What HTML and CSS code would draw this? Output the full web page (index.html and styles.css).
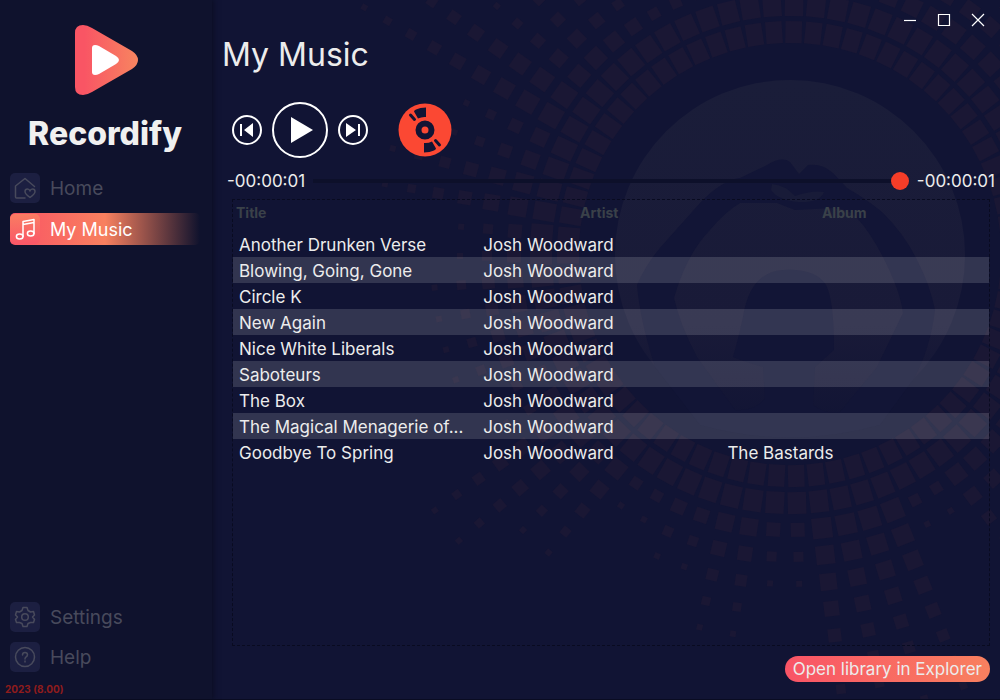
FILE: index.html
```html
<!DOCTYPE html>
<html lang="en">
<head>
  <meta charset="UTF-8">
  <meta name="viewport" content="width=device-width, initial-scale=1.0">
  <title>Recordify</title>
  <link rel="stylesheet" href="styles.css">
</head>
<body>
  <div class="app">
    <!-- Sidebar -->
    <aside class="sidebar">
      <svg class="logo" viewBox="0 0 64 70" aria-hidden="true">
        <defs>
          <linearGradient id="logoFill" x1="0" y1="0" x2="1" y2="0">
            <stop offset="0.15" stop-color="#f95564"/>
            <stop offset="1" stop-color="#f78560"/>
          </linearGradient>
        </defs>
        <path d="M0 8Q0 0 8 0Q12 0 17 3L57 26Q63 30 63 35Q63 40 57 44L17 67Q12 70 8 70Q0 70 0 62Z" fill="url(#logoFill)"/>
        <path d="M17 23Q17 20 20 20Q22 20 24 21L41 31Q44 33 44 35Q44 37 41 39L24 49Q22 50 20 50Q17 50 17 47Z" fill="#fff"/>
      </svg>
      <div class="brand">Recordify</div>

      <nav class="menu">
        <a class="menu-item" href="#home">
          <span class="menu-icon">
            <svg viewBox="0 0 30 30"><path d="M15 25H6.500Q5.500 25 5.500 24V13L15 5.500L24.500 13.500"/><path d="M20 24.500Q15 21 15 18.500Q15 16 17.500 16Q19.300 16 20 18Q20.700 16 22.500 16Q25 16 25 18.500Q25 21 20 24.500Z"/></svg>
          </span>
          Home
        </a>
        <a class="menu-item active" href="#music">
          <span class="menu-icon">
            <svg viewBox="0 0 30 30"><ellipse cx="9.700" cy="22.500" rx="3.300" ry="2.500"/><ellipse cx="20.700" cy="19.500" rx="3.300" ry="2.500"/><path d="M13 22.500V7.500L24 5.500V19.500M13 10.500L24 8.500"/></svg>
          </span>
          My Music
        </a>
      </nav>

      <nav class="menu menu-bottom">
        <a class="menu-item" href="#settings">
          <span class="menu-icon">
            <svg viewBox="0 0 30 30"><circle cx="15" cy="15" r="3.300"/><path d="M13 5.500H17L18 8.500L20.500 10L23.500 9.500L24.500 13L22.500 15L24.500 17.500L23.500 20.500L20.500 20.500L18 21.500L17 24.500H13L12 21.500L9.500 20.500L6.500 20.500L5.500 17.500L7.500 15L5.500 13L6.500 9.500L9.500 10L12 8.500Z"/></svg>
          </span>
          Settings
        </a>
        <a class="menu-item" href="#help">
          <span class="menu-icon">
            <svg viewBox="0 0 30 30"><circle cx="15" cy="15" r="9.500"/><path d="M12.500 13Q12.500 10.500 15 10.500Q17.500 10.500 17.500 12.800Q17.500 14.200 16 15Q15 15.700 15 17M15 19V20"/></svg>
          </span>
          Help
        </a>
      </nav>
      <div class="version">2023 (8.00)</div>
    </aside>

    <!-- Main area -->
    <main class="content">
      <svg class="backdrop" viewBox="212 0 788 700" preserveAspectRatio="xMidYMin slice" aria-hidden="true">
        <defs>
          <linearGradient id="discFade" x1="0" y1="0" x2="0" y2="1">
            <stop offset="0" stop-color="#1a1d39"/>
            <stop offset="0.7" stop-color="#191a38"/>
            <stop offset="1" stop-color="#111434"/>
          </linearGradient>
        </defs>
        <g id="blocks" fill="#1a1734"></g>
        <circle cx="790" cy="255" r="175" fill="url(#discFade)"/>
        <!-- raised arms making a heart, with the head between them -->
        <path class="arms" d="M655 367Q640 320 637 285Q648 260 667 240L700 203Q722 180 740 178L767 165Q782 156 790 162L799 174L808 165Q822 163 833 173L847 188Q868 200 883 213Q905 235 917 260Q930 285 935 310Q930 350 913 380L880 425Q790 450 700 425Z
          M674 298Q680 325 697 357L735 410Q755 412 765 398L763 367Q745 362 733 357Q738 340 743 317Q750 272 783 270Q815 268 826 285Q834 300 834 350L815 367L813 405Q827 415 840 412L877 367L903 313Q900 290 883 257Q870 232 857 218Q848 208 833 208L795 210L777 203H740Q725 212 710 230Q686 255 674 298Z"/>
        <path d="M772 184Q785 185 795 196Q812 190 824 192Q820 203 798 202Q778 200 771 190Z" fill="#181b38"/>
      </svg>

      <div class="window-buttons">
        <button type="button" aria-label="Minimize"><svg viewBox="0 0 14 14"><path d="M1 7.500H13"/></svg></button>
        <button type="button" aria-label="Maximize"><svg viewBox="0 0 14 14"><path d="M1.500 1.500H12.500V12.500H1.500Z"/></svg></button>
        <button type="button" aria-label="Close"><svg viewBox="0 0 14 14"><path d="M1 1L13 13M13 1L1 13"/></svg></button>
      </div>

      <h1>My Music</h1>

      <div class="player">
        <button type="button" class="small" aria-label="Previous">
          <svg viewBox="0 0 30 30"><circle cx="15" cy="15" r="14"/><path d="M8 9H10V21H8ZM21 8V22L12 15Z"/></svg>
        </button>
        <button type="button" class="play" aria-label="Play">
          <svg viewBox="0 0 56 56"><circle cx="28" cy="28" r="27"/><path d="M19 15V41L41 28Z"/></svg>
        </button>
        <button type="button" class="small" aria-label="Next">
          <svg viewBox="0 0 30 30"><circle cx="15" cy="15" r="14"/><path d="M22 9H20V21H22ZM8 8V22L18 15Z"/></svg>
        </button>
        <button type="button" class="record" aria-label="Record">
          <svg viewBox="0 0 54 54">
            <circle class="disc" cx="27" cy="27" r="26.500"/>
            <circle class="hub" cx="27" cy="27" r="6.500"/>
            <g id="shine">
              <path d="M16 8.500Q16 7.500 18 6.500Q22 4.500 28 4.500V14Q24 13.500 20 15.500Q18 12 16 8.500Z"/>
              <path class="slit" d="M12.500 12L16.500 16.500"/>
            </g>
            <use href="#shine" transform="rotate(180 27 27)"/>
          </svg>
        </button>
      </div>

      <div class="seek">
        <span>-00:00:01</span>
        <input type="range" min="0" max="100" value="100" aria-label="Position">
        <span>-00:00:01</span>
      </div>

      <div class="library">
        <table>
          <thead>
            <tr><th>Title</th><th>Artist</th><th>Album</th></tr>
          </thead>
          <tbody>
            <tr><td>Another Drunken Verse</td><td>Josh Woodward</td><td></td></tr>
            <tr><td>Blowing, Going, Gone</td><td>Josh Woodward</td><td></td></tr>
            <tr><td>Circle K</td><td>Josh Woodward</td><td></td></tr>
            <tr><td>New Again</td><td>Josh Woodward</td><td></td></tr>
            <tr><td>Nice White Liberals</td><td>Josh Woodward</td><td></td></tr>
            <tr><td>Saboteurs</td><td>Josh Woodward</td><td></td></tr>
            <tr><td>The Box</td><td>Josh Woodward</td><td></td></tr>
            <tr><td>The Magical Menagerie of...</td><td>Josh Woodward</td><td></td></tr>
            <tr><td>Goodbye To Spring</td><td>Josh Woodward</td><td>The Bastards</td></tr>
          </tbody>
        </table>
      </div>

      <button type="button" class="open-library">Open library in Explorer</button>
    </main>
  </div>

  <script src="backdrop.js"></script>
</body>
</html>
```
FILE: styles.css
```css
* {
  box-sizing: border-box;
}

body {
  margin: 0;
  background: #111434;
  color: #ececec;
  font-family: Inter, sans-serif;
  font-size: 17px;
}

button {
  padding: 0;
  border: none;
  background: none;
  color: inherit;
  font: inherit;
  cursor: pointer;
}

svg {
  display: block;
}

.app {
  display: grid;
  grid-template-columns: 212px 1fr;
  min-height: 100vh;
  border-bottom: 1px solid #0a0c22;
}

/* Sidebar */
.sidebar {
  position: relative;
  z-index: 1;
  display: flex;
  flex-direction: column;
  padding: 25px 12px 4px 10px;
  background: #0f122d;
  box-shadow: 0 0 6px 1px #0a0c20;
}

.logo {
  width: 64px;
  height: 70px;
  margin-left: 65px;
}

.brand {
  margin: 18px 0 19px;
  color: #f0f0f0;
  font-size: 32px;
  font-weight: 800;
  line-height: 41px;
  text-align: center;
}

.menu {
  display: flex;
  flex-direction: column;
  gap: 10px;
}

.menu-bottom {
  margin-top: auto;
}

.menu-item {
  display: flex;
  align-items: center;
  gap: 10px;
  height: 30px;
  border-radius: 5px;
  color: #484a5c;
  font-size: 19px;
  text-decoration: none;
}

.menu-icon {
  width: 30px;
  height: 30px;
  border-radius: 5px;
  background: #1c1f41;
}

.menu-icon svg {
  fill: none;
  stroke: currentColor;
  stroke-width: 1.5;
  stroke-linejoin: round;
  stroke-linecap: round;
}

.menu-item.active {
  height: 32px;
  background: linear-gradient(to right, #fa5465, #f8805f 50%, rgba(248, 128, 95, 0));
  color: #fff;
  font-size: 18px;
}

.active .menu-icon {
  background: linear-gradient(#f97d62, #fa5768);
}

.version {
  margin: 11px 0 0 -5px;
  color: #8f1c1c;
  font-size: 10px;
  font-weight: 700;
  line-height: 12px;
}

/* Main area */
.content {
  position: relative;
  display: flex;
  flex-direction: column;
  padding: 10px 10px 17px 20px;
}

.backdrop {
  position: absolute;
  inset: 0;
  z-index: -1;
  width: 100%;
  height: 100%;
}

.arms {
  fill: #121536;
  fill-rule: evenodd;
}

.window-buttons {
  display: flex;
  justify-content: flex-end;
  gap: 14px;
  height: 20px;
  padding-right: 2px;
}

.window-buttons button {
  width: 20px;
}

.window-buttons svg {
  width: 14px;
  margin: auto;
  fill: none;
  stroke: #fff;
  stroke-width: 1.2;
}

h1 {
  margin: 5px 0 27px -10px;
  font-size: 32px;
  font-weight: 400;
  line-height: 40px;
}

.player {
  display: flex;
  align-items: center;
  gap: 10px;
}

.player circle {
  stroke: #fff;
  stroke-width: 2;
  fill: none;
}

.player path {
  fill: #fff;
}

.player .small {
  width: 30px;
}

.player .play {
  width: 56px;
}

.player .record {
  width: 54px;
  margin-left: 20px;
}

.record .disc {
  fill: #fb4833;
  stroke: none;
}

.record .hub {
  stroke: #111434;
  stroke-width: 6;
}

.record path {
  fill: #111434;
}

.record .slit {
  stroke: #111434;
  stroke-width: 3;
  stroke-linecap: round;
}

.seek {
  display: flex;
  align-items: center;
  gap: 8px;
  height: 24px;
  margin: 11px -5px 6px;
}

.seek input {
  flex: 1;
  min-width: 0;
  height: 18px;
  margin: 0;
  appearance: none;
  background: linear-gradient(#0d102a, #0d102a) center / 100% 4px no-repeat;
}

.seek input::-webkit-slider-thumb {
  appearance: none;
  width: 18px;
  height: 18px;
  border-radius: 50%;
  background: #f53d28;
}

.library {
  flex: 1;
  border: 1px dashed #090b20;
}

table {
  width: 100%;
  table-layout: fixed;
  border-collapse: collapse;
}

th {
  height: 31px;
  padding: 0 0 6px;
  color: #3a4149;
  font-size: 14px;
  font-weight: 700;
}

th:first-child {
  width: 32.3%;
  padding-left: 3px;
  text-align: left;
}

th:nth-child(2) {
  width: 32.3%;
}

th:last-child {
  padding-right: 22px;
}

td {
  height: 26px;
  padding: 1px 6px 0;
  overflow: hidden;
  white-space: nowrap;
  text-overflow: ellipsis;
}

tbody tr:nth-child(even) {
  background: rgba(255, 255, 255, 0.14);
}

.open-library {
  align-self: flex-end;
  height: 26px;
  margin-top: 10px;
  padding: 0 8px;
  border-radius: 13px;
  background: linear-gradient(to right, #f95466, #f8805f);
}
```
FILE: backdrop.js
```js
// Rings of blocks round the disc; each spoke has its own length
const CENTER_X = 790;
const CENTER_Y = 254;
const SPOKES = 71;
const lengths = [
  5, 5, 7, 7, 5, 5, 4, 4, 7, 7, 9, 9, 5, 5, 6, 6, 6, 6, 5, 5,
  8, 8, 6, 6, 11, 11, 7, 7, 6, 5, 4, 4, 4, 4, 4, 5, 5, 5, 6, 6,
  7, 7, 8, 8, 8, 8, 8, 8, 8, 8, 8, 8, 8, 8, 8, 8, 8, 8, 8, 8,
  8, 8, 7, 7, 7, 4, 4, 11, 11, 11, 11
];

const blocks = document.getElementById('blocks');
lengths.forEach((length, spoke) => {
  const angle = (spoke * 360) / SPOKES - 1.6;
  for (let ring = 1; ring <= length; ring++) {
    const radius = 195 + ring * 27;
    const size = 6 + (20 / length) * (length - ring);
    const full = ((2 * Math.PI * radius) / SPOKES) * 0.84;
    const w = ring < 3 ? full : Math.min(20, size);
    const h = ring < 3 ? 22 : Math.min(21, size);
    const rect = document.createElementNS('http://www.w3.org/2000/svg', 'rect');
    rect.setAttribute('x', CENTER_X - w / 2);
    rect.setAttribute('y', CENTER_Y + radius - h / 2);
    rect.setAttribute('width', w);
    rect.setAttribute('height', h);
    rect.setAttribute('transform', `rotate(${angle} ${CENTER_X} ${CENTER_Y})`);
    blocks.appendChild(rect);
  }
});
```
